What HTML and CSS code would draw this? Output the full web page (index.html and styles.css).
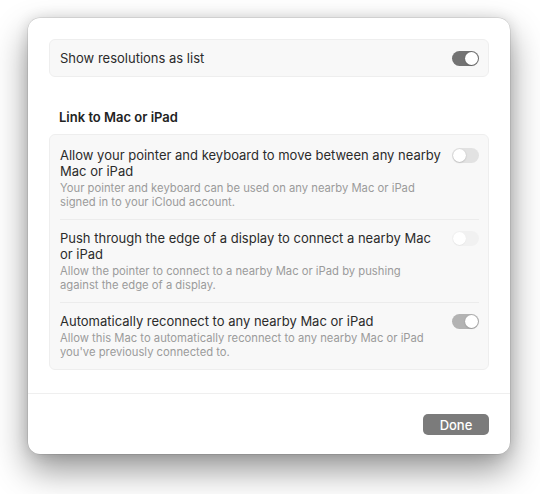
FILE: index.html
```html
<!DOCTYPE html>
<html lang="en">
<head>
<meta charset="utf-8">
<title>Display settings</title>
<link rel="stylesheet" href="styles.css">
</head>
<body>
<div class="sheet">
  <div class="content">
    <div class="card card-single">
      <span class="label">Show resolutions as list</span>
      <span class="toggle on"></span>
    </div>

    <h2 class="section-title">Link to Mac or iPad</h2>

    <div class="card card-list">
      <div class="row first">
        <div class="text">
          <div class="label">Allow your pointer and keyboard to move between any nearby Mac or iPad</div>
          <div class="desc">Your pointer and keyboard can be used on any nearby Mac or iPad signed in to your iCloud account.</div>
        </div>
        <span class="toggle off"></span>
      </div>
      <div class="row">
        <div class="text">
          <div class="label">Push through the edge of a display to connect a nearby Mac or iPad</div>
          <div class="desc">Allow the pointer to connect to a nearby Mac or iPad by pushing against the edge of a display.</div>
        </div>
        <span class="toggle off disabled"></span>
      </div>
      <div class="row">
        <div class="text">
          <div class="label">Automatically reconnect to any nearby Mac or iPad</div>
          <div class="desc">Allow this Mac to automatically reconnect to any nearby Mac or iPad you've previously connected to.</div>
        </div>
        <span class="toggle on dim"></span>
      </div>
    </div>
  </div>
  <div class="footer">
    <button class="done">Done</button>
  </div>
</div>
</body>
</html>
```
FILE: styles.css
```css
* { box-sizing: border-box; }
html, body { margin: 0; padding: 0; background: #ffffff; }
body {
  font-family: Inter, "Noto Sans", "Liberation Sans", sans-serif;
  color: #2b2b2b;
  padding: 18px 0 40px 28px;
  min-height: 494px;
}
.sheet {
  width: 482px;
  height: 436px;
  background: #ffffff;
  border-radius: 12px;
  box-shadow: 0 0 0 0.5px rgba(0,0,0,0.14), 0 16px 34px rgba(0,0,0,0.42), 0 0 14px rgba(0,0,0,0.12);
  display: flex;
  flex-direction: column;
  overflow: hidden;
}
.content {
  padding: 21px 21px 22px 21px;
  flex: 1;
}
.card {
  background: #f8f8f8;
  border: 1px solid #eeeeee;
  border-radius: 6px;
}
.card-single {
  height: 38px;
  display: flex;
  align-items: center;
  justify-content: space-between;
  padding: 0 9px 0 10px;
}
.label {
  font-size: 13px;
  line-height: 16px;
  color: #2b2b2b;
}
.section-title {
  margin: 32px 0 9px 10px;
  font-size: 13px;
  line-height: 16px;
  font-weight: 600;
  color: #222222;
}
.card-list { padding: 0 9px 0 10px; }
.row {
  display: flex;
  justify-content: space-between;
  align-items: flex-start;
  padding: 10px 0;
  border-top: 1px solid #ececec;
}
.row.first { border-top: none; padding-top: 12px; }
.text { width: 384px; }
.desc {
  margin-top: 2px;
  font-size: 11.25px;
  line-height: 14px;
  color: #9b9b9b;
  width: 372px;
}
.toggle {
  flex: none;
  position: relative;
  width: 27px;
  height: 15px;
  border-radius: 8px;
  background: #e2e2e2;
}
.row .toggle { margin-top: 1px; }
.toggle::after {
  content: "";
  position: absolute;
  top: 1px;
  width: 13px;
  height: 13px;
  border-radius: 50%;
  background: #ffffff;
  box-shadow: 0 0.5px 1.5px rgba(0,0,0,0.25);
}
.toggle.off::after { left: 1px; }
.toggle.on { background: #737373; }
.toggle.on::after { right: 1px; }
.toggle.dim { background: #b3b3b3; }
.toggle.disabled { background: #f1f1f1; }
.toggle.disabled::after { box-shadow: 0 0.5px 1px rgba(0,0,0,0.08); }
.footer {
  border-top: 1px solid #efefef;
  padding: 20px 21px 19px;
  display: flex;
  justify-content: flex-end;
}
.done {
  width: 66px;
  height: 21px;
  border: none;
  border-radius: 5px;
  background: #7b7b7b;
  color: #ffffff;
  font-family: Inter, "Noto Sans", "Liberation Sans", sans-serif;
  font-size: 13px;
  font-weight: 500;
  padding: 0;
}
```
